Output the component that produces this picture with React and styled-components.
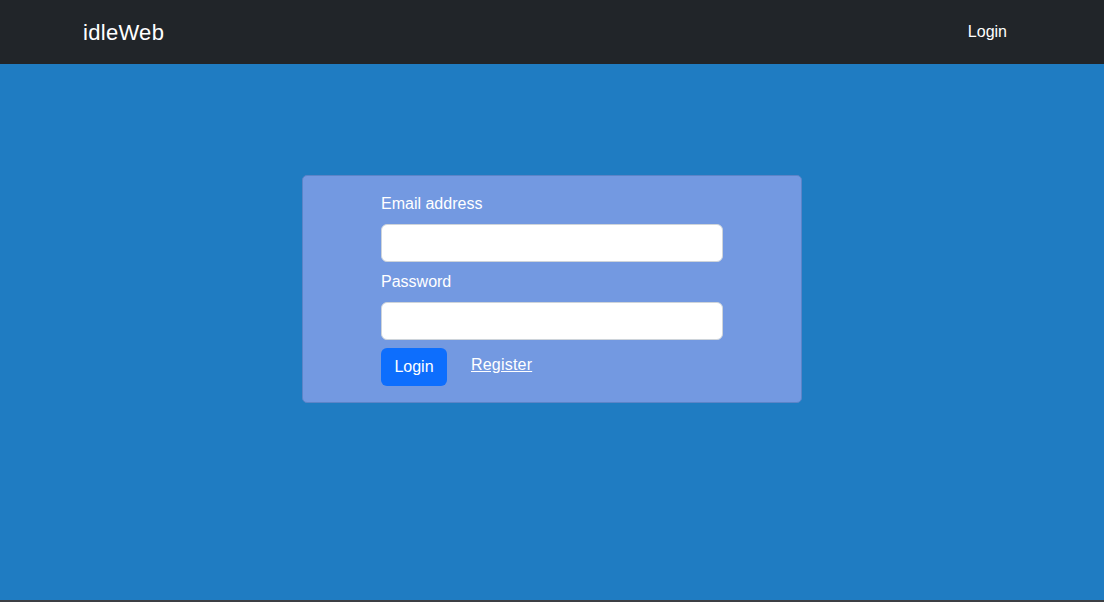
import React from 'react';
import styled, { createGlobalStyle } from "styled-components"

const Global = createGlobalStyle`
    html, body {
        margin:0;
        padding:0;
        background:#3c3f44;
        font-family:"Liberation Sans", Arial, sans-serif;
        font-size:16px;
        line-height:1.5;
    }
    * { box-sizing:border-box; }
`

const Nav = styled.nav`
    height:64px;
    background:#212529;
`
const NavInner = styled.div`
    width:960px;
    margin:0 auto;
    padding:0 12px;
    height:100%;
    display:flex;
    align-items:center;
    justify-content:space-between;
`
const Brand = styled.a`
    color:#fff;
    font-size:22px;
    letter-spacing:0.3px;
    margin-left:-1px;
    text-decoration:none;
`
const NavLink = styled.a`
    color:#fff;
    font-size:16px;
    padding:8px;
    margin-right:5px;
    text-decoration:none;
`

const Main = styled.main`
    height:536px;
    background:#1f7cc2;
    padding-top:111px;
`

const Card = styled.div`
    width:500px;
    margin:0 auto;
    background:#7399e1;
    border:1px solid #5b84c8;
    border-radius:5px;
    padding:16px 0 16px;
`
const Form = styled.form`
    width:342px;
    margin:0 auto;
`
const Label = styled.label`
    display:block;
    color:#fff;
    margin-bottom:8px;
`
const Input = styled.input`
    display:block;
    width:100%;
    height:38px;
    border:1px solid #ced4da;
    border-radius:6px;
    background:#fff;
    margin-bottom:8px;
    font:inherit;
    padding:6px 12px;
`
const Actions = styled.div`
    display:flex;
    align-items:flex-start;
    gap:24px;
`
const Button = styled.button`
    height:38px;
    width:66px;
    padding:0;
    border:none;
    border-radius:6px;
    background:#0d6efd;
    color:#fff;
    font:inherit;
`
const Link = styled.a`
    color:#fff;
    text-decoration:underline;
    margin-top:5px;
    letter-spacing:0.2px;
`

export default function App() {
    return (
        <>
            <Global />
            <Nav>
                <NavInner>
                    <Brand href="#">idleWeb</Brand>
                    <NavLink href="#">Login</NavLink>
                </NavInner>
            </Nav>
            <Main>
                <Card>
                    <Form onSubmit={e => e.preventDefault()}>
                        <Label>Email address</Label>
                        <Input type="email" />
                        <Label>Password</Label>
                        <Input type="password" />
                        <Actions>
                            <Button>Login</Button>
                            <Link href="#">Register</Link>
                        </Actions>
                    </Form>
                </Card>
            </Main>
        </>
    );
}
